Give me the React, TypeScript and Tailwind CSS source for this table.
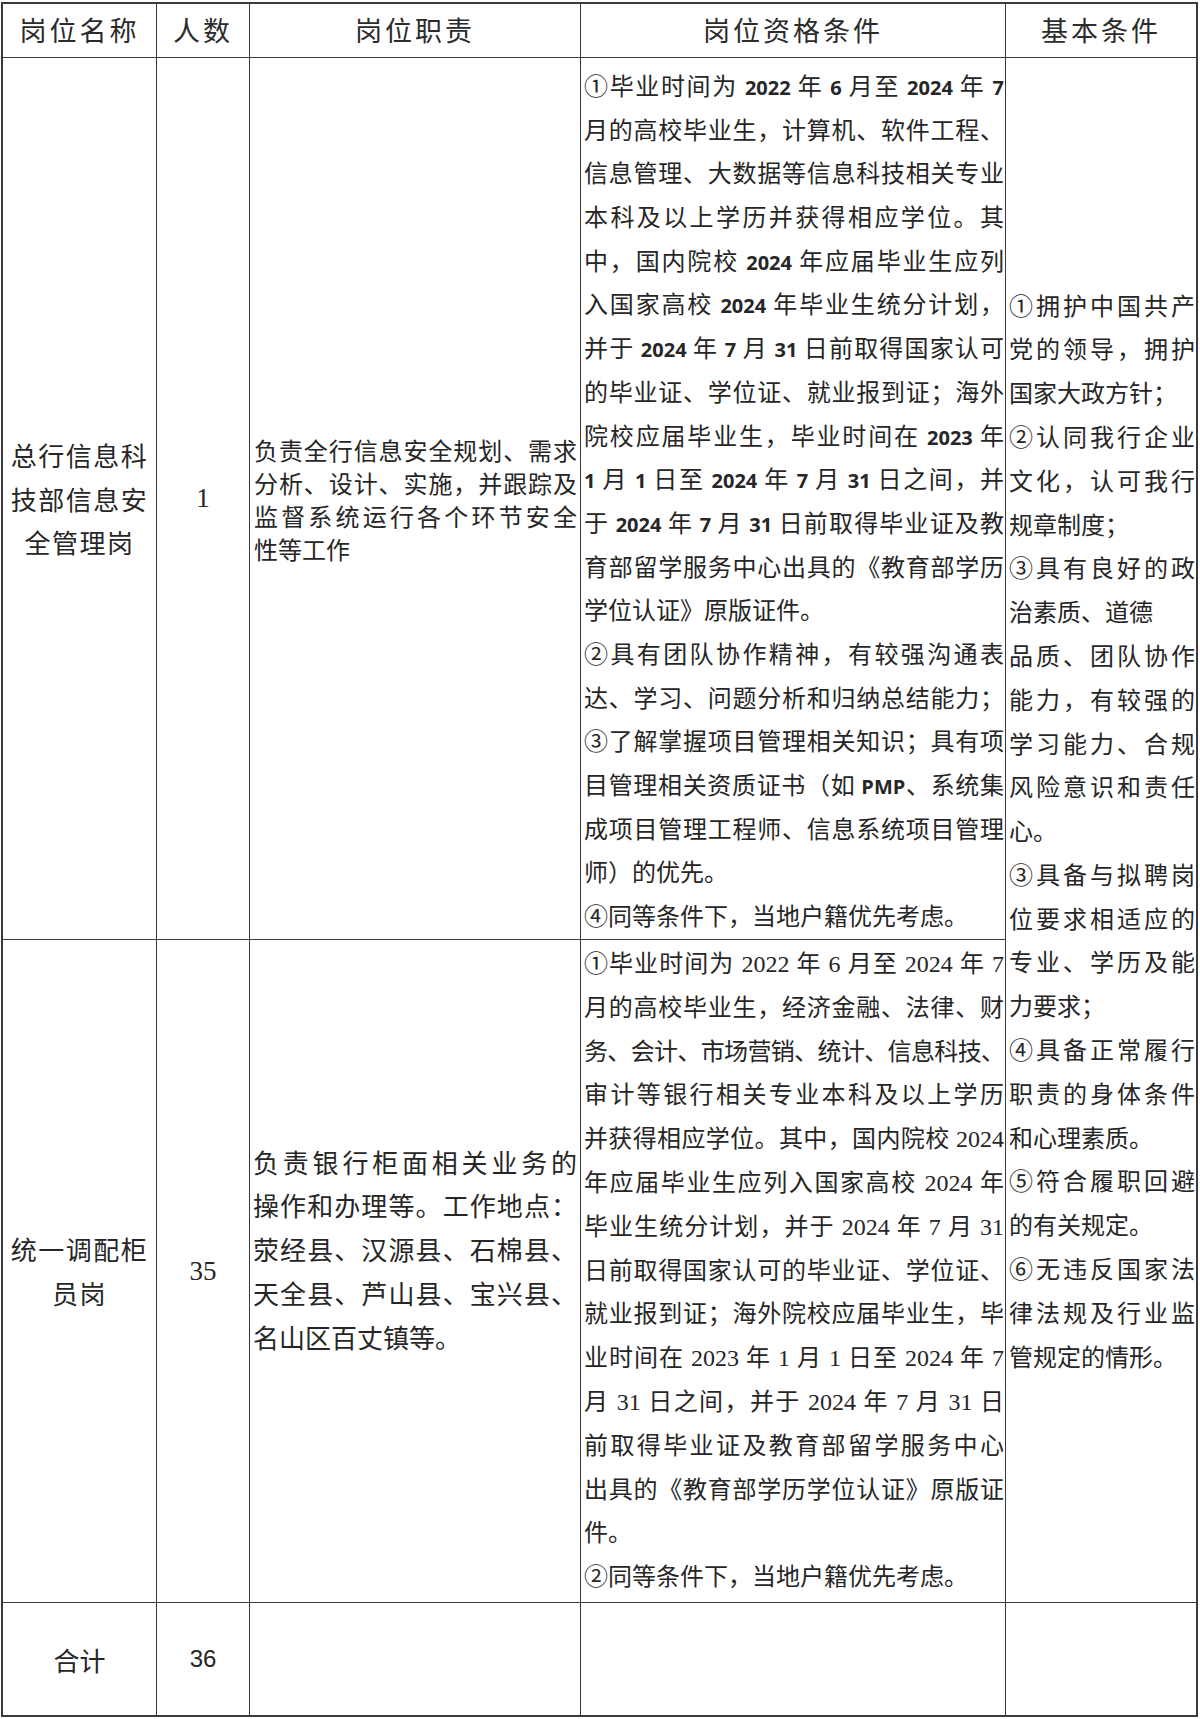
import React from "react";

type L = { c: React.ReactNode; last?: boolean; cls?: string };

const B = ({ children }: { children: React.ReactNode }) => (
  <span className="[font-family:'Open_Sans',sans-serif] font-bold text-[20px] leading-none">{children}</span>
);

function Lines({ lines, h }: { lines: L[]; h: string }) {
  return (
    <>
      {lines.map((l, i) => (
        <div
          key={i}
          className={
            (l.last ? "text-left " : "text-justify [text-align-last:justify] ") + h + " " + (l.cls ?? "")
          }
        >
          {l.c}
        </div>
      ))}
    </>
  );
}

const r1q: L[] = [
  { c: <>①毕业时间为 <B>2022</B> 年 <B>6</B> 月至 <B>2024</B> 年 <B>7</B></> },
  { c: "月的高校毕业生，计算机、软件工程、" },
  { c: "信息管理、大数据等信息科技相关专业" },
  { c: "本科及以上学历并获得相应学位。其" },
  { c: <>中，国内院校 <B>2024</B> 年应届毕业生应列</> },
  { c: <>入国家高校 <B>2024</B> 年毕业生统分计划，</> },
  { c: <>并于 <B>2024</B> 年 <B>7</B> 月 <B>31</B> 日前取得国家认可</> },
  { c: "的毕业证、学位证、就业报到证；海外" },
  { c: <>院校应届毕业生，毕业时间在 <B>2023</B> 年</> },
  { c: <><B>1</B> 月 <B>1</B> 日至 <B>2024</B> 年 <B>7</B> 月 <B>31</B> 日之间，并</> },
  { c: <>于 <B>2024</B> 年 <B>7</B> 月 <B>31</B> 日前取得毕业证及教</> },
  { c: "育部留学服务中心出具的《教育部学历" },
  { c: "学位认证》原版证件。", last: true },
  { c: "②具有团队协作精神，有较强沟通表" },
  { c: "达、学习、问题分析和归纳总结能力；" },
  { c: "③了解掌握项目管理相关知识；具有项" },
  { c: <>目管理相关资质证书（如 <B>PMP</B>、系统集</> },
  { c: "成项目管理工程师、信息系统项目管理" },
  { c: "师）的优先。", last: true },
  { c: "④同等条件下，当地户籍优先考虑。", last: true },
];

const r2q: L[] = [
  { c: "①毕业时间为 2022 年 6 月至 2024 年 7" },
  { c: "月的高校毕业生，经济金融、法律、财" },
  { c: "务、会计、市场营销、统计、信息科技、", cls: "tracking-[-1px]" },
  { c: "审计等银行相关专业本科及以上学历" },
  { c: "并获得相应学位。其中，国内院校 2024" },
  { c: "年应届毕业生应列入国家高校 2024 年" },
  { c: "毕业生统分计划，并于 2024 年 7 月 31" },
  { c: "日前取得国家认可的毕业证、学位证、" },
  { c: "就业报到证；海外院校应届毕业生，毕" },
  { c: "业时间在 2023 年 1 月 1 日至 2024 年 7" },
  { c: "月 31 日之间，并于 2024 年 7 月 31 日" },
  { c: "前取得毕业证及教育部留学服务中心" },
  { c: "出具的《教育部学历学位认证》原版证" },
  { c: "件。", last: true },
  { c: "②同等条件下，当地户籍优先考虑。", last: true },
];

const basic: L[] = [
  { c: "①拥护中国共产" },
  { c: "党的领导，拥护" },
  { c: "国家大政方针；", last: true },
  { c: "②认同我行企业" },
  { c: "文化，认可我行" },
  { c: "规章制度；", last: true },
  { c: "③具有良好的政" },
  { c: "治素质、道德", last: true },
  { c: "品质、团队协作" },
  { c: "能力，有较强的" },
  { c: "学习能力、合规" },
  { c: "风险意识和责任" },
  { c: "心。", last: true },
  { c: "③具备与拟聘岗" },
  { c: "位要求相适应的" },
  { c: "专业、学历及能" },
  { c: "力要求；", last: true },
  { c: "④具备正常履行" },
  { c: "职责的身体条件" },
  { c: "和心理素质。", last: true },
  { c: "⑤符合履职回避" },
  { c: "的有关规定。", last: true },
  { c: "⑥无违反国家法" },
  { c: "律法规及行业监" },
  { c: "管规定的情形。", last: true },
];

const duty1: L[] = [
  { c: "负责全行信息安全规划、需求" },
  { c: "分析、设计、实施，并跟踪及" },
  { c: "监督系统运行各个环节安全" },
  { c: "性等工作", last: true },
];

const duty2: L[] = [
  { c: "负责银行柜面相关业务的" },
  { c: "操作和办理等。工作地点：" },
  { c: "荥经县、汉源县、石棉县、" },
  { c: "天全县、芦山县、宝兴县、" },
  { c: "名山区百丈镇等。", last: true },
];

export default function App() {
  const head = "bg-white flex items-center justify-center text-[27px] tracking-[3px] text-[#2b2b2b]";
  return (
    <div className="bg-white w-[1200px] h-[1719px] pt-[2px] pl-[1px] [font-family:'Noto_Sans_CJK_SC',sans-serif] text-[#262626]">
      <div className="grid w-[1197px] grid-cols-[153px_92px_330px_424px_190px] grid-rows-[53px_881px_662px_112px] gap-px bg-[#3a3a3a] p-[2px]">
        {/* header */}
        <div className={head}>岗位名称</div>
        <div className={head}>人数</div>
        <div className={head}>岗位职责</div>
        <div className={head}>岗位资格条件</div>
        <div className={head}>基本条件</div>

        {/* row 1 */}
        <div className="bg-white flex items-center justify-center text-center text-[26px] leading-[43.8px] tracking-[1.5px]">
          <div>
            总行信息科
            <br />
            技部信息安
            <br />
            全管理岗
          </div>
        </div>
        <div className="bg-white flex items-center justify-center [font-family:'Liberation_Serif',serif] text-[27px]">
          1
        </div>
        <div className="bg-white flex items-center pl-[4px] pr-[3px] text-[24px] leading-[33px]">
          <div className="w-full">
            <Lines lines={duty1} h="h-[33px]" />
          </div>
        </div>
        <div className="bg-white pt-[5px] pl-[3px] pr-[1px] text-[24px] leading-[43.7px]">
          <Lines lines={r1q} h="h-[43.7px]" />
        </div>
        <div className="bg-white row-span-2 flex items-center pl-[3px] pr-[1px] text-[24px] leading-[43.8px]">
          <div className="w-full">
            <Lines lines={basic} h="h-[43.8px]" />
          </div>
        </div>

        {/* row 2 */}
        <div className="bg-white flex items-center justify-center text-center text-[26px] leading-[43.8px] tracking-[1.5px]">
          <div>
            统一调配柜
            <br />
            员岗
          </div>
        </div>
        <div className="bg-white flex items-center justify-center [font-family:'Liberation_Serif',serif] text-[27px]">
          35
        </div>
        <div className="bg-white flex items-center pb-[44px] pl-[3px] pr-[3px] text-[26px] leading-[43.8px]">
          <div className="w-full">
            <Lines lines={duty2} h="h-[43.8px]" />
          </div>
        </div>
        <div className="bg-white pt-[3px] pl-[3px] pr-[1px] text-[24px] leading-[43.8px] [font-family:'Liberation_Serif','Noto_Sans_CJK_SC',serif]">
          <Lines lines={r2q} h="h-[43.8px]" />
        </div>

        {/* total */}
        <div className="bg-white flex items-center justify-center text-[26px]">合计</div>
        <div className="bg-white flex items-center justify-center [font-family:'Liberation_Sans',sans-serif] text-[24px]">
          36
        </div>
        <div className="bg-white" />
        <div className="bg-white" />
        <div className="bg-white" />
      </div>
    </div>
  );
}
